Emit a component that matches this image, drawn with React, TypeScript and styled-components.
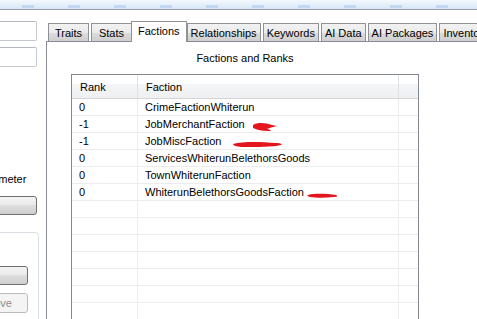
import React from "react";
import styled, { createGlobalStyle } from "styled-components";

const GlobalStyle = createGlobalStyle`
  html, body {
    margin: 0;
    padding: 0;
    background: #ffffff;
  }
  body {
    font-family: "Liberation Sans", Arial, sans-serif;
    font-size: 11px;
    color: #000;
  }
`;

const Window = styled.div`
  width: 477px;
  height: 319px;
  overflow: hidden;
  background: #fff;
  display: flex;
  flex-direction: column;
`;

const TitleStrip = styled.div`
  height: 9px;
  flex: none;
  border-bottom: 1px solid #9b9ea3;
  background:
    repeating-linear-gradient(90deg, transparent 0 22px, rgba(170, 200, 235, 0.55) 22px 34px, transparent 34px 46px),
    linear-gradient(#f3f8fd, #d7e7f7);
  background-size: 100% 3px, 100% 100%;
  background-position: 0 5px, 0 0;
  background-repeat: repeat-x, no-repeat;
`;

const Body = styled.div`
  flex: 1;
  display: flex;
  min-height: 0;
`;

const SidePane = styled.div`
  width: 46px;
  flex: none;
  overflow: hidden;
`;

const SideInner = styled.div`
  margin-left: -40px;
  width: 79px;
  display: flex;
  flex-direction: column;
`;

const TextBox = styled.div<{ $top: number }>`
  margin-top: ${(p) => p.$top}px;
  width: 77px;
  height: 20px;
  box-sizing: border-box;
  border: 1px solid #c6cad0;
  border-top-color: #b4b8be;
  border-radius: 2px;
  background: #fff;
`;

const FieldLabel = styled.div`
  margin-top: 106px;
  padding-left: 15px;
  line-height: 13px;
  white-space: nowrap;
`;

const PushButton = styled.div<{ $width: number; $top: number; $disabled?: boolean }>`
  margin-top: ${(p) => p.$top}px;
  width: ${(p) => p.$width}px;
  height: ${(p) => (p.$disabled ? 20 : 19)}px;
  box-sizing: border-box;
  border: 1px solid ${(p) => (p.$disabled ? "#b9bcbf" : "#707070")};
  border-radius: 3px;
  background: ${(p) =>
    p.$disabled
      ? "#f4f4f4"
      : "linear-gradient(#f3f3f3 0%, #ebebeb 45%, #dddddd 50%, #cfcfcf 100%)"};
  color: ${(p) => (p.$disabled ? "#8d8d8d" : "#000")};
  display: flex;
  align-items: center;
  justify-content: center;
  padding-right: 6px;
`;

const GroupBox = styled.div`
  margin-top: 17px;
  width: 79px;
  height: 120px;
  box-sizing: border-box;
  border: 1px solid #d9dfe4;
  border-radius: 4px;
  display: flex;
  flex-direction: column;
`;

const TabArea = styled.div`
  width: 470px;
  flex: none;
  display: flex;
  flex-direction: column;
  padding-top: 11px;
`;

const TabStrip = styled.div`
  height: 20px;
  display: flex;
  align-items: flex-end;
  gap: 2px;
  padding-left: 2px;
  position: relative;
  z-index: 1;
`;

const Tab = styled.div<{ $active?: boolean }>`
  box-sizing: border-box;
  min-width: 41px;
  padding: ${(p) => (p.$active ? "0 6px" : "0 3px")};
  height: ${(p) => (p.$active ? 21 : 18)}px;
  margin: ${(p) => (p.$active ? "0 -2px -1px -3px" : "0")};
  border: 1px solid #8e9297;
  border-bottom: ${(p) => (p.$active ? "none" : "0")};
  background: ${(p) =>
    p.$active ? "#ffffff" : "linear-gradient(#f2f2f2 0%, #ebebeb 50%, #dcdcdc 51%, #cfcfcf 100%)"};
  display: flex;
  align-items: ${(p) => (p.$active ? "flex-start" : "center")};
  padding-top: ${(p) => (p.$active ? 3 : 1)}px;
  justify-content: center;
  white-space: nowrap;
  position: relative;
  z-index: ${(p) => (p.$active ? 2 : 0)};
`;

const TabPanel = styled.div`
  flex: 1;
  border-top: 1px solid #898c95;
  border-left: 1px solid #898c95;
  background: #fff;
  padding-left: 24px;
  display: flex;
  flex-direction: column;
`;

const SectionTitle = styled.div`
  width: 348px;
  padding-top: 10px;
  margin-bottom: 9px;
  line-height: 13px;
  text-align: center;
`;

const ListBox = styled.div`
  position: relative;
  width: 348px;
  flex: 1;
  box-sizing: border-box;
  border: 1px solid #828790;
  border-bottom: none;
  overflow: hidden;
`;

const HeaderRow = styled.div`
  display: grid;
  grid-template-columns: 66px 261px 1fr;
  height: 24px;
  box-sizing: border-box;
  border-bottom: 1px solid #d5d5d5;
  background: linear-gradient(#ffffff 0%, #ffffff 38%, #f4f5f6 40%, #eef0f2 100%);
`;

const HeaderCell = styled.div`
  display: flex;
  align-items: center;
  padding-left: 8px;
  border-right: 1px solid #dfe2e5;
  &:last-child {
    border-right: none;
  }
`;

const Row = styled.div`
  display: grid;
  grid-template-columns: 66px 261px 1fr;
  height: 17px;
  box-sizing: border-box;
  border-bottom: 1px solid #ececec;
`;

const Cell = styled.div`
  display: flex;
  align-items: center;
  padding-left: 7px;
  border-right: 1px solid #ececec;
  white-space: nowrap;
  &:last-child {
    border-right: none;
  }
`;

const Scribbles = styled.svg`
  position: absolute;
  left: 0;
  top: 0;
  pointer-events: none;
`;

const tabs = ["Traits", "Stats", "Factions", "Relationships", "Keywords", "AI Data", "AI Packages", "Inventory"];

const factions = [
  { rank: "0", name: "CrimeFactionWhiterun" },
  { rank: "-1", name: "JobMerchantFaction" },
  { rank: "-1", name: "JobMiscFaction" },
  { rank: "0", name: "ServicesWhiterunBelethorsGoods" },
  { rank: "0", name: "TownWhiterunFaction" },
  { rank: "0", name: "WhiterunBelethorsGoodsFaction" },
];

const emptyRows = 8;

export default function App() {
  return (
    <>
      <GlobalStyle />
      <Window>
        <TitleStrip />
        <Body>
          <SidePane>
            <SideInner>
              <TextBox $top={11} />
              <TextBox $top={6} />
              <FieldLabel>Parameter</FieldLabel>
              <PushButton $width={77} $top={10} />
              <GroupBox>
                <PushButton $width={67} $top={33} />
                <PushButton $width={67} $top={8} $disabled>
                  Remove
                </PushButton>
              </GroupBox>
            </SideInner>
          </SidePane>

          <TabArea>
            <TabStrip>
              {tabs.map((t) => (
                <Tab key={t} $active={t === "Factions"}>
                  {t}
                </Tab>
              ))}
            </TabStrip>
            <TabPanel>
              <SectionTitle>Factions and Ranks</SectionTitle>
              <ListBox>
                <HeaderRow>
                  <HeaderCell>Rank</HeaderCell>
                  <HeaderCell>Faction</HeaderCell>
                  <HeaderCell />
                </HeaderRow>
                {factions.map((f) => (
                  <Row key={f.name}>
                    <Cell>{f.rank}</Cell>
                    <Cell>{f.name}</Cell>
                    <Cell />
                  </Row>
                ))}
                {Array.from({ length: emptyRows }).map((_, i) => (
                  <Row key={"e" + i}>
                    <Cell />
                    <Cell />
                    <Cell />
                  </Row>
                ))}
                {/* red marker strokes drawn over the list */}
                <Scribbles width="346" height="250" viewBox="0 0 346 250">
                  <path
                    d="M181 50 C186 47 194 48 200 50 L205 51 C201 52 197 53 195 54 C199 55 201 56 196 56 C190 56 185 55 181 53 Z"
                    fill="#e3161d"
                  />
                  <path
                    d="M161 69 C172 66 190 67 204 68 C208 68 211 69 209 70 C200 72 185 72 172 72 C166 72 161 71 161 69 Z"
                    fill="#e3161d"
                  />
                  <path
                    d="M236 120 C244 118 256 119 264 120 C266 121 265 122 262 122 C253 123 244 123 238 122 C235 121 235 120 236 120 Z"
                    fill="#e3161d"
                  />
                </Scribbles>
              </ListBox>
            </TabPanel>
          </TabArea>
        </Body>
      </Window>
    </>
  );
}
